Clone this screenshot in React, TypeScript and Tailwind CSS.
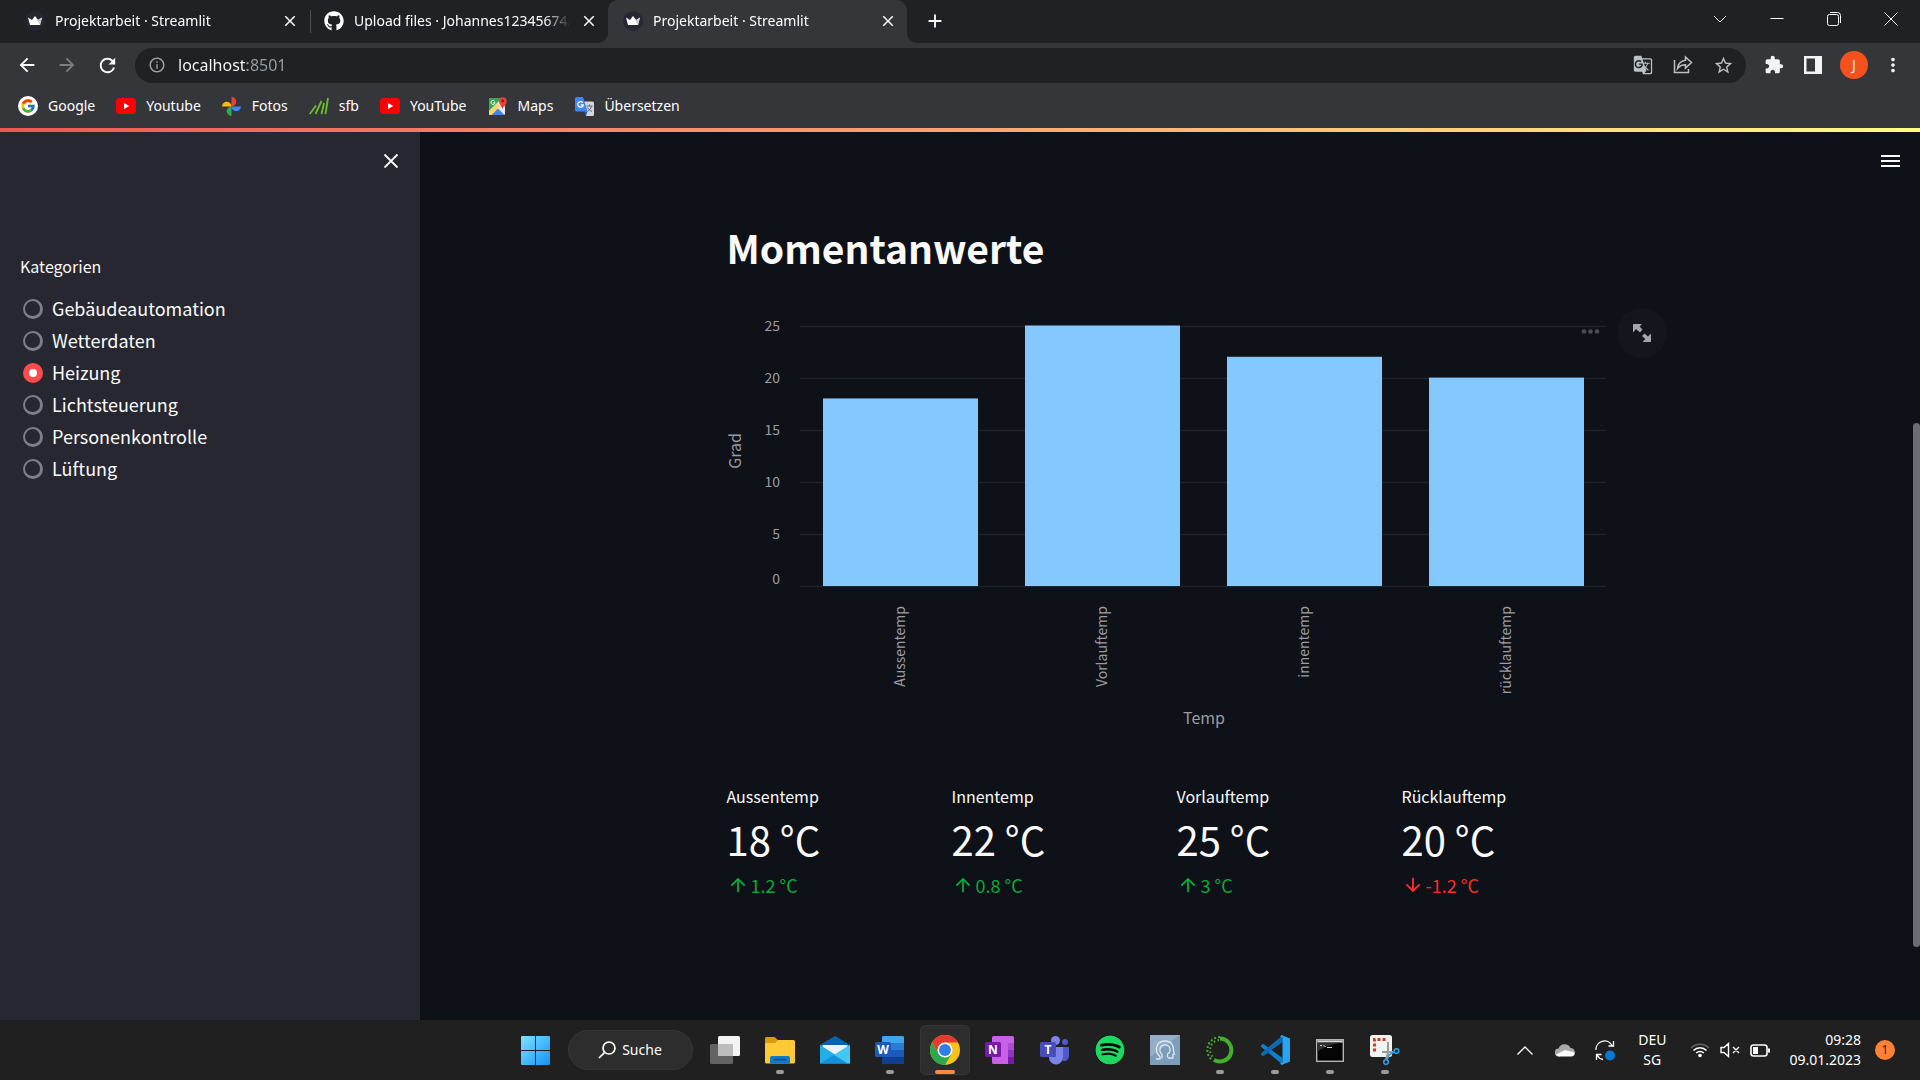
import React, { useState } from "react";
import { FcGoogle } from "react-icons/fc";
import { FaGithub, FaSpotify } from "react-icons/fa";
import {
  MdArrowBack,
  MdArrowForward,
  MdRefresh,
  MdInfoOutline,
  MdGTranslate,
  MdStarOutline,
  MdExtension,
  MdMoreVert,
  MdClose,
  MdAdd,
  MdArrowUpward,
  MdArrowDownward,
} from "react-icons/md";

/* ---------- Browser tabs ---------- */

function Crown() {
  return (
    <svg viewBox="0 0 20 20" className="size-5 shrink-0" aria-hidden="true">
      <circle cx="10" cy="10" r="10" fill="#262730" />
      <path d="M3 6.5l4 2.600L10 5l3 4.100 4-2.600-2 7.500H5z" fill="#fff" />
      <path d="M10 5l3 4.100 4-2.600-2 7.500z" fill="#c9c9ce" />
    </svg>
  );
}

function TabBody({ icon, title }: { icon: React.ReactNode; title: string }) {
  return (
    <>
      {icon}
      <span className="min-w-0 flex-1 overflow-hidden whitespace-nowrap [mask-image:linear-gradient(to_right,#000_88%,transparent)]">
        {title}
      </span>
      <button aria-label="Tab schließen" className="shrink-0">
        <MdClose className="size-[18px]" />
      </button>
    </>
  );
}

function TabStrip() {
  return (
    <div className="flex h-[43px] bg-[#35363a] text-sm text-white">
      <div className="flex w-[608px] shrink-0 rounded-br-[10px] bg-[#202124]">
        <div className="flex w-[310px] items-center gap-[10px] pr-[11px] pb-[2px] pl-[25px]">
          <TabBody icon={<Crown />} title="Projektarbeit · Streamlit" />
        </div>
        <div className="my-[10px] w-px bg-[#4d4e52]" />
        <div className="flex w-[297px] items-center gap-[10px] pr-[10px] pb-[2px] pl-[13px]">
          <TabBody icon={<FaGithub className="size-5 shrink-0" />} title="Upload files · Johannes12345674/" />
        </div>
      </div>
      <div className="flex shrink-0 bg-[#202124]">
        <div className="flex w-[299px] items-center gap-[10px] rounded-t-[10px] bg-[#35363a] pr-[10px] pb-[2px] pl-[15px]">
          <TabBody icon={<Crown />} title="Projektarbeit · Streamlit" />
        </div>
      </div>
      <div className="flex min-w-0 flex-1 items-center justify-between rounded-bl-[10px] bg-[#202124]">
        <button aria-label="Neuer Tab" className="mb-[2px] ml-[17px]">
          <MdAdd className="size-[22px]" />
        </button>
        <div className="mb-[6px] flex">
          <button aria-label="Tabs suchen" className="flex w-[57px] justify-center">
            <svg width="14" height="14" viewBox="0 0 14 14" fill="none" stroke="currentColor">
              <path d="M1 4l6 6 6-6" />
            </svg>
          </button>
          <button aria-label="Minimieren" className="flex w-[57px] justify-center">
            <svg width="14" height="14" viewBox="0 0 14 14" fill="none" stroke="currentColor">
              <path d="M0.500 6.500h13" />
            </svg>
          </button>
          <button aria-label="Verkleinern" className="flex w-[57px] justify-center">
            <svg width="14" height="14" viewBox="0 0 14 14" fill="none" stroke="currentColor">
              <rect x="0.500" y="2.500" width="11" height="11" rx="2" />
              <path d="M3 .5h7.500a3 3 0 0 1 3 3V11" />
            </svg>
          </button>
          <button aria-label="Schließen" className="flex w-[58px] justify-center">
            <svg width="14" height="14" viewBox="0 0 14 14" fill="none" stroke="currentColor">
              <path d="M.5.5l13 13M13.500.5l-13 13" />
            </svg>
          </button>
        </div>
      </div>
    </div>
  );
}

/* ---------- Toolbar ---------- */

function Toolbar() {
  return (
    <div className="flex h-[45px] items-center bg-[#35363a] pr-4 pb-px pl-4 text-white">
      <div className="flex w-[119px] shrink-0 items-center gap-[18px]">
        <button aria-label="Zurück"><MdArrowBack className="size-[22px]" /></button>
        <button aria-label="Vor"><MdArrowForward className="size-[22px] text-[#7d7e82]" /></button>
        <button aria-label="Neu laden"><MdRefresh className="size-[23px]" /></button>
      </div>
      <div className="flex h-[35px] flex-1 items-center rounded-full bg-[#202124] pr-3 pl-[13px] text-[#bdc1c6]">
        <MdInfoOutline className="size-[18px] text-[#9aa0a6]" />
        <input
          aria-label="Adresse"
          defaultValue="localhost:8501"
          className="ml-3 min-w-0 flex-1 bg-[linear-gradient(to_right,#fff_69px,#9aa0a6_69px)] bg-clip-text text-base leading-6 text-transparent outline-none"
        />
        <div className="flex items-center gap-5">
          <button aria-label="Übersetzen"><MdGTranslate className="size-[20px]" /></button>
          <button aria-label="Teilen">
            <svg className="size-5" viewBox="0 0 20 20" fill="none" stroke="currentColor" strokeWidth="1.500">
              <path d="M1.500 5v12.500h14V14M12.500 2l6 5.500-6 5.500v-3.200c-3.500 0-6 1.200-8 3.700.6-4.500 3.500-7.600 8-8.200z" />
            </svg>
          </button>
          <button aria-label="Lesezeichen"><MdStarOutline className="size-[21px]" /></button>
        </div>
      </div>
      <div className="ml-[18px] flex items-center text-[#f1f3f4]">
        <button aria-label="Erweiterungen"><MdExtension className="size-5" /></button>
        <button aria-label="Seitenleiste" className="ml-5">
          <svg className="size-[18px]" viewBox="0 0 18 18">
            <path d="M0 0h18v18H0zM2.500 2.500v13h8.500v-13z" fill="currentColor" fillRule="evenodd" />
          </svg>
        </button>
        <button className="ml-[18px] size-7 rounded-full bg-[#f4511e] text-sm leading-7">J</button>
        <button aria-label="Menü" className="ml-[14px]"><MdMoreVert className="size-[22px]" /></button>
      </div>
    </div>
  );
}

/* ---------- Bookmarks ---------- */

function YouTubeIcon() {
  return (
    <svg width="20" height="16" viewBox="0 0 20 16">
      <rect width="20" height="16" rx="3.500" fill="#f00" />
      <path d="M8 5l5.200 3L8 11z" fill="#fff" />
    </svg>
  );
}

function PhotosIcon() {
  return (
    <svg width="19" height="19" viewBox="0 0 20 20">
      <path d="M10 0a5 5 0 0 1 0 10z" fill="#ea4335" />
      <path d="M20 10a5 5 0 0 1-10 0z" fill="#4285f4" />
      <path d="M10 20a5 5 0 0 1 0-10z" fill="#34a853" />
      <path d="M0 10a5 5 0 0 1 10 0z" fill="#fbbc04" />
    </svg>
  );
}

function SfbIcon() {
  return (
    <svg width="20" height="18" viewBox="0 0 20 18" fill="none" stroke="#6cbf2d" strokeWidth="1.800">
      <path d="M.8 17L7 8.500M6.500 17l6-13M12.500 17L15 6M16.500 17L19 1" />
    </svg>
  );
}

function MapsIcon() {
  return (
    <svg width="18" height="18" viewBox="0 0 18 18">
      <rect y="1" width="16" height="17" rx="1.500" fill="#e8eaed" />
      <path d="M0 2.500A1.500 1.500 0 0 1 1.500 1H13L0 14z" fill="#34a853" />
      <path d="M0 14L8 6.500l3 3L2.500 18H1.500A1.500 1.500 0 0 1 0 16.500z" fill="#fdd663" />
      <path d="M2.500 18L9 11.500 15.500 18z" fill="#4285f4" />
      <path d="M13.300 12c-.5-3-3.300-4.300-3.300-8a3.700 3.700 0 1 1 7.700 0c0 3.700-3.200 5-4.400 8z" fill="#ea4335" />
      <circle cx="13.800" cy="4" r="1.400" fill="#8c1c13" />
      <path d="M5.800 4.500a2 2 0 1 0 .2 1.300H4.200" stroke="#fff" fill="none" />
    </svg>
  );
}

function TranslateIcon() {
  return (
    <svg width="19" height="19" viewBox="0 0 19 19">
      <path d="M8 4.500h9.500A1.500 1.500 0 0 1 19 6v11.500a1.500 1.500 0 0 1-1.500 1.500H11z" fill="#d3d6da" />
      <path d="M11.500 9h6M14.500 7.500V9M16.500 9c-.5 2.500-2 4-4 5.500M12.500 10.500c.8 1.800 2.500 3 4.500 4" stroke="#5f6b80" fill="none" />
      <path d="M1.500 0H8l4.500 14.500h-11A1.500 1.500 0 0 1 0 13V1.500A1.500 1.500 0 0 1 1.500 0z" fill="#4285f4" />
      <path d="M7.800 5.700A2.800 2.800 0 1 0 8.300 8H5.700" stroke="#fff" strokeWidth="1.300" fill="none" />
      <path d="M9 14.500h3.500L11 19z" fill="#1a56c4" />
    </svg>
  );
}

const bookmarks = [
  {
    label: "Google",
    icon: (
      <span className="flex size-5 items-center justify-center rounded-full bg-white">
        <FcGoogle className="size-4" />
      </span>
    ),
  },
  { label: "Youtube", icon: <YouTubeIcon /> },
  { label: "Fotos", icon: <PhotosIcon /> },
  { label: "sfb", icon: <SfbIcon /> },
  { label: "YouTube", icon: <YouTubeIcon /> },
  { label: "Maps", icon: <MapsIcon /> },
  { label: "Übersetzen", icon: <TranslateIcon /> },
];

function Bookmarks() {
  return (
    <nav className="flex h-10 items-center gap-[21px] bg-[#35363a] pb-1 pl-[18px] text-sm text-white">
      {bookmarks.map((b, i) => (
        <a key={i} href="#" className="flex items-center gap-[10px]">
          <span className="flex w-5 justify-center">{b.icon}</span>
          {b.label}
        </a>
      ))}
    </nav>
  );
}

/* ---------- Streamlit sidebar ---------- */

const categories = ["Gebäudeautomation", "Wetterdaten", "Heizung", "Lichtsteuerung", "Personenkontrolle", "Lüftung"];

function Sidebar() {
  const [active, setActive] = useState("Heizung");
  return (
    <aside className="w-[420px] shrink-0 bg-[#262730] text-[#fafafa]">
      <div className="flex h-[58px] items-center justify-end pr-[19px]">
        <button aria-label="Seitenleiste schließen">
          <svg className="size-5" viewBox="0 0 20 20" stroke="currentColor" strokeWidth="1.800">
            <path d="M3.500 3.500l13 13M16.500 3.500l-13 13" />
          </svg>
        </button>
      </div>
      <fieldset className="mt-16 px-5">
        <legend className="text-base leading-6">Kategorien</legend>
        <div className="mt-[15px] flex flex-col">
          {categories.map((c) => (
            <label key={c} className="flex h-8 items-center gap-[9px] pl-[3px] text-lg leading-[30px]">
              <input
                type="radio"
                name="kategorie"
                checked={active === c}
                onChange={() => setActive(c)}
                className="size-5 appearance-none rounded-full border-2 border-r-[3px] border-b-[3px] border-[#7d7e87] bg-[#262730] checked:border-[6px] checked:border-[#ff4b4b] checked:bg-white"
              />
              <span className="pb-[2px]">{c}</span>
            </label>
          ))}
        </div>
      </fieldset>
    </aside>
  );
}

/* ---------- Chart ---------- */

const ticks = [0, 5, 10, 15, 20, 25];
const bars = [
  { name: "Aussentemp", value: 18 },
  { name: "Vorlauftemp", value: 25 },
  { name: "innentemp", value: 22 },
  { name: "rücklauftemp", value: 20 },
];
const BASE = 278;
const UNIT = 10.42;

function Chart() {
  return (
    <div className="relative mt-[34px]">
      <svg viewBox="0 0 880 423" className="w-full overflow-visible" role="img" aria-label="Temperaturen in Grad">
        {ticks.map((t) => (
          <g key={t}>
            <path d={`M73 ${Math.round(BASE - t * UNIT) + 0.5}h806`} stroke="#20232a" strokeWidth="1.500" />
            <text
              x="53"
              y={BASE - t * UNIT + (t === 0 ? -2 : 5)}
              textAnchor="end"
              fontSize="14"
              fill="#9b9ca2"
            >
              {t}
            </text>
          </g>
        ))}
        {bars.map((b, i) => (
          <g key={b.name}>
            <rect x={96 + i * 202} y={BASE - b.value * UNIT} width="155" height={b.value * UNIT} fill="#83c9ff" />
            <text
              transform={`translate(${178 + i * 202} 298) rotate(-90)`}
              textAnchor="end"
              fontSize="14"
              fill="#9b9ca2"
            >
              {b.name}
            </text>
          </g>
        ))}
        <text transform="translate(14 143) rotate(-90)" textAnchor="middle" fontSize="16" fill="#9b9ca2">
          Grad
        </text>
        <text x="477" y="416" textAnchor="middle" fontSize="16" fill="#9b9ca2">
          Temp
        </text>
        <g fill="#4b4d53">
          <circle cx="857" cy="23.500" r="2.300" />
          <circle cx="863.500" cy="23.500" r="2.300" />
          <circle cx="870" cy="23.500" r="2.300" />
        </g>
      </svg>
      <button
        aria-label="Vollbild"
        className="absolute top-0 left-full ml-[10px] flex size-[50px] items-center justify-center rounded-full bg-[#13161d]"
      >
        <svg className="size-[18px]" viewBox="0 0 18 18" fill="#a3a5a9">
          <path d="M0 0h9L6.500 2.500 9.500 5.500 7 8.500l-4-3.500L0 8.500zM18 18H9.500l2.800-3L9 12l2.500-2.500 3.500 3 3-3z" />
        </svg>
      </button>
    </div>
  );
}

/* ---------- Metrics ---------- */

const metrics = [
  { label: "Aussentemp", value: "18 °C", delta: "1.2 °C", up: true },
  { label: "Innentemp", value: "22 °C", delta: "0.8 °C", up: true },
  { label: "Vorlauftemp", value: "25 °C", delta: "3 °C", up: true },
  { label: "Rücklauftemp", value: "20 °C", delta: "-1.2 °C", up: false },
];

function Metrics() {
  return (
    <div className="mt-[53px] grid grid-cols-4 gap-5">
      {metrics.map((m) => (
        <div key={m.label}>
          <div className="text-base leading-6">{m.label}</div>
          <div className="mt-1 text-[40px] leading-[54px]">{m.value}</div>
          <div className={m.up ? "mt-[7px] flex items-center gap-[2px] text-lg leading-6 text-[#09ab3b]" : "mt-[7px] flex items-center gap-[2px] text-lg leading-6 text-[#ff2b2b]"}>
            {m.up ? <MdArrowUpward className="size-[22px]" /> : <MdArrowDownward className="size-[22px]" />}
            {m.delta}
          </div>
        </div>
      ))}
    </div>
  );
}

/* ---------- Taskbar ---------- */

function StartIcon() {
  return (
    <svg className="size-[29px]" viewBox="0 0 29 29">
      <defs>
        <linearGradient id="win" x1="0" y1="0" x2="1" y2="1">
          <stop offset="0" stopColor="#7be3ff" />
          <stop offset="1" stopColor="#1593f5" />
        </linearGradient>
      </defs>
      <path
        d="M1 0h13v14H0V1a1 1 0 0 1 1-1zM15 0h13a1 1 0 0 1 1 1v13H15zM0 15h14v14H1a1 1 0 0 1-1-1zM15 15h14v13a1 1 0 0 1-1 1H15z"
        fill="url(#win)"
      />
    </svg>
  );
}

function TaskViewIcon() {
  return (
    <svg className="size-[30px]" viewBox="0 0 30 30">
      <rect x="0" y="9" width="23" height="20" rx="1.500" fill="#636363" />
      <rect x="8" y="1" width="22" height="20" rx="1.500" fill="#f3f3f3" />
      <path d="M8 9h15v12H8z" fill="#bdbdbd" />
    </svg>
  );
}

function ExplorerIcon() {
  return (
    <svg className="size-[30px]" viewBox="0 0 30 30">
      <path d="M0 3.500A1.500 1.500 0 0 1 1.500 2h8L13 5v5H0z" fill="#d99a10" />
      <path d="M0 8l10 0 3-3h15.500A1.500 1.500 0 0 1 30 6.500V27a1.500 1.500 0 0 1-1.500 1.500h-27A1.500 1.500 0 0 1 0 27z" fill="#fdc935" />
      <path d="M5 28.500V23a2 2 0 0 1 2-2h16a2 2 0 0 1 2 2v5.500z" fill="#0f78c8" />
      <path d="M9 24.500h12" stroke="#0a4f8c" strokeWidth="1.500" />
    </svg>
  );
}

function MailIcon() {
  return (
    <svg className="size-[30px]" viewBox="0 0 30 30">
      <path d="M0 10L15 1l15 9v6H0z" fill="#0a62b5" />
      <path d="M2.500 10h25v9h-25z" fill="#eef1f4" />
      <path d="M0 10l15 9.500L30 10v18.500H0z" fill="#23aeea" />
      <path d="M30 10L13 20.500 26 28.500h4z" fill="#42c8f5" />
      <path d="M0 28.500l14-8.500 14 8.500z" fill="#1590dc" />
    </svg>
  );
}

function LetterBadge({ letter, color }: { letter: string; color: string }) {
  return (
    <>
      <rect x="0" y="7" width="16" height="15" rx="1.500" fill={color} />
      <text x="8" y="18.500" textAnchor="middle" fontSize="12" fontWeight="700" fill="#fff">
        {letter}
      </text>
    </>
  );
}

function WordIcon() {
  return (
    <svg className="size-[30px]" viewBox="0 0 30 30">
      <rect x="7" y="1" width="22" height="28" rx="1.500" fill="#2b7cd3" />
      <path d="M7 8V2.500A1.500 1.500 0 0 1 8.500 1h19A1.500 1.500 0 0 1 29 2.500V8z" fill="#41a5ee" />
      <path d="M7 15h22v7H7z" fill="#185abd" />
      <path d="M7 22h22v5.500a1.500 1.500 0 0 1-1.500 1.500h-19A1.500 1.500 0 0 1 7 27.500z" fill="#103f91" />
      <LetterBadge letter="W" color="#185abd" />
    </svg>
  );
}

function ChromeIcon() {
  return (
    <svg className="size-[30px]" viewBox="0 0 30 30">
      <circle cx="15" cy="15" r="15" fill="#fbc116" />
      <path d="M2 7.500A15 15 0 0 1 28 7.500H15L8.500 18.750z" fill="#e33b2e" />
      <path d="M2 7.500A15 15 0 0 0 15 30l6.500-11.250L8.500 18.750z" fill="#2ca94f" />
      <circle cx="15" cy="15" r="7.500" fill="#fff" />
      <circle cx="15" cy="15" r="6" fill="#2f7de9" />
    </svg>
  );
}

function OneNoteIcon() {
  return (
    <svg className="size-[30px]" viewBox="0 0 30 30">
      <rect x="7" y="1" width="22" height="28" rx="1.500" fill="#c961e6" />
      <path d="M23 8h6v7h-6z" fill="#ae4bd5" />
      <path d="M23 15h6v7h-6z" fill="#9332bf" />
      <path d="M23 22h6v7h-6z" fill="#7719aa" />
      <LetterBadge letter="N" color="#7719aa" />
    </svg>
  );
}

function TeamsIcon() {
  return (
    <svg className="size-[30px]" viewBox="0 0 30 30">
      <circle cx="15.500" cy="5.500" r="4.500" fill="#7b83eb" />
      <circle cx="25" cy="7" r="3" fill="#5059c9" />
      <path d="M20 12h9v9a5 5 0 0 1-6 5z" fill="#5059c9" />
      <path d="M8 12h15v10a7 7 0 0 1-14 1z" fill="#7b83eb" />
      <LetterBadge letter="T" color="#464eb8" />
    </svg>
  );
}

function HeadIcon() {
  return (
    <svg className="size-[30px]" viewBox="0 0 30 30">
      <rect width="30" height="30" fill="#7c9cba" />
      <path d="M0 0h30L0 22z" fill="#93aec6" />
      <g fill="none" stroke="#dfe9f2" strokeWidth="1.300">
        <path d="M6 24h4v-2.500C4.500 17 5 6.500 14.500 6c7-.2 9.500 5 9 9.500l1 3.500-1.500.5v3.500h-5" />
        <path d="M12 23.500v-4C8.500 16.500 9.500 9.800 15 9.800c6 .2 6.500 7.200 2.500 9.200v3.500" />
      </g>
    </svg>
  );
}

function AnacondaIcon() {
  return (
    <svg className="size-[30px]" viewBox="0 0 30 30" fill="none" stroke="#43b02a">
      <path d="M15 3.500a11.500 11.500 0 1 1-6 21.400" strokeWidth="4" />
      <path d="M15 2a13 13 0 0 0-8 23" strokeWidth="2" strokeDasharray="2 2" />
      <path d="M14 5a10 10 0 0 0-6 17" strokeWidth="2" strokeDasharray="1.500 2.500" />
    </svg>
  );
}

function CodeIcon() {
  return (
    <svg className="size-[30px]" viewBox="0 0 30 30">
      <path d="M1 10.500L3 8.800 22.500 23v6.500L1 11.800z" fill="#0f7fcb" />
      <path d="M1 19.500l2 1.700L22.500 7V.5L1 18.200z" fill="#0b6cb4" />
      <path d="M21.500 0L30 3.500v23L21.500 30 20 28.500l2.500-1V2.500L20 1.500z" fill="#27a5f2" />
    </svg>
  );
}

function TerminalIcon() {
  return (
    <svg className="size-[28px]" viewBox="0 0 28 28">
      <rect x=".7" y="3.700" width="26.600" height="21.600" fill="#050505" stroke="#b5b5b5" strokeWidth="1.400" />
      <path d="M1.400 4.400h25.200v2.200H1.400z" fill="#d9d9d9" />
      <path d="M1.400 6.600h25.200C18 8 8 11 1.400 16z" fill="#303030" />
      <path d="M4 9.500h2M7.500 9l2 2M11 11.500h5" stroke="#d0d0d0" />
    </svg>
  );
}

function SnipIcon() {
  return (
    <svg className="size-[30px]" viewBox="0 0 30 30" fill="none">
      <rect width="22" height="22" rx="2.500" fill="#f2f2f2" />
      <path d="M4.500 16.500V4.500h12.500" stroke="#d1401c" strokeWidth="3" strokeDasharray="3 2" />
      <path d="M18 7v11l-2 6M12 17h11" stroke="#9a9a9a" strokeWidth="2" />
      <circle cx="16" cy="27" r="2.300" stroke="#2aa3e6" strokeWidth="1.600" />
      <circle cx="26.500" cy="16" r="2.300" stroke="#2aa3e6" strokeWidth="1.600" />
      <path d="M17 25l2-5 5-3" stroke="#2aa3e6" strokeWidth="1.800" />
    </svg>
  );
}

const apps = [
  { name: "Aktive Anwendungen", icon: <TaskViewIcon />, state: "" },
  { name: "Explorer", icon: <ExplorerIcon />, state: "open" },
  { name: "Mail", icon: <MailIcon />, state: "" },
  { name: "Word", icon: <WordIcon />, state: "open" },
  { name: "Chrome", icon: <ChromeIcon />, state: "active" },
  { name: "OneNote", icon: <OneNoteIcon />, state: "" },
  { name: "Teams", icon: <TeamsIcon />, state: "" },
  { name: "Spotify", icon: <FaSpotify className="size-[30px] rounded-full bg-black text-[#1ed760]" />, state: "" },
  { name: "Profil", icon: <HeadIcon />, state: "" },
  { name: "Anaconda", icon: <AnacondaIcon />, state: "open" },
  { name: "Visual Studio Code", icon: <CodeIcon />, state: "open" },
  { name: "Eingabeaufforderung", icon: <TerminalIcon />, state: "open" },
  { name: "Snipping Tool", icon: <SnipIcon />, state: "open" },
];

function AppButton({ name, icon, state }: { name: string; icon: React.ReactNode; state: string }) {
  return (
    <button
      aria-label={name}
      className={
        state === "active"
          ? "relative flex size-[50px] items-center justify-center rounded-[5px] border border-[#363636] bg-[#2d2d2d]"
          : "relative flex size-[50px] items-center justify-center"
      }
    >
      {icon}
      {state === "open" && <span className="absolute bottom-[1px] h-1 w-2 rounded-full bg-[#9b9b9b]" />}
      {state === "active" && <span className="absolute bottom-0 h-1 w-5 rounded-full bg-[#ff8c3c]" />}
    </button>
  );
}

function Taskbar() {
  return (
    <footer className="grid h-[60px] grid-cols-[1fr_auto_1fr] items-center bg-[#202020] text-[15px] text-white">
      <div />
      <div className="flex items-center gap-[5px]">
        <button aria-label="Start" className="mr-[2px] flex size-[50px] items-center justify-center">
          <StartIcon />
        </button>
        <button className="mr-[2px] flex h-10 w-[125px] items-center justify-center gap-[6px] rounded-full border border-[#363636] bg-[#2d2d2d] text-sm">
          <svg className="size-[18px]" viewBox="0 0 18 18" fill="none" stroke="currentColor" strokeWidth="1.700">
            <circle cx="11" cy="7" r="6" />
            <path d="M6.700 11.300L1 17" />
          </svg>
          Suche
        </button>
        {apps.map((a) => (
          <AppButton key={a.name} {...a} />
        ))}
      </div>
      <div className="flex items-center justify-end pr-[25px] text-sm leading-5">
        <svg width="16" height="9" viewBox="0 0 16 9" fill="none" stroke="currentColor" strokeWidth="1.300">
          <path d="M.5 8.500L8 1l7.500 7.500" />
        </svg>
        <svg className="ml-[22px]" width="20" height="14" viewBox="0 0 20 14">
          <path d="M4 13.500A4 4 0 0 1 3.500 5.500a6.500 6.500 0 0 1 12-.5A4.300 4.300 0 0 1 20 9.300z" fill="#a9a9a9" />
          <path d="M1 11.500L10 7l9.800 2.500a4 4 0 0 1-3.800 4H4a4 4 0 0 1-3-2z" fill="#fff" />
        </svg>
        <svg className="ml-5" width="20" height="21" viewBox="0 0 20 21" fill="none" stroke="#fff" strokeWidth="1.300">
          <path d="M1 10a8.500 8.500 0 0 1 16-4.500M18.500 1v5h-5M8 19.500A8.500 8.500 0 0 1 2 15M1.500 20v-5.500h5" />
          <circle cx="15" cy="15.500" r="5" fill="#0a78d6" stroke="none" />
        </svg>
        <div className="ml-[23px] text-center">
          DEU
          <br />
          SG
        </div>
        <svg className="ml-6" width="20" height="16" viewBox="0 0 20 16" fill="none" stroke="#fff" strokeWidth="1.500">
          <path d="M1 6a12.500 12.500 0 0 1 18 0" stroke="#666" />
          <path d="M3.500 8.500a9 9 0 0 1 13 0M6.200 11a5.500 5.500 0 0 1 7.600 0" />
          <circle cx="10" cy="13.500" r="1.800" fill="#fff" stroke="none" />
        </svg>
        <svg className="ml-[10px]" width="20" height="16" viewBox="0 0 20 16" fill="none" stroke="#fff" strokeWidth="1.400">
          <path d="M1 5.500h3L8.500 1.500v13L4 10.500H1zM13 5l6 6M19 5l-6 6" />
        </svg>
        <svg className="ml-[10px]" width="20" height="13" viewBox="0 0 20 13" fill="none" stroke="#fff" strokeWidth="1.600">
          <rect x="1" y="1" width="16" height="11" rx="2.500" />
          <path d="M3 3h5v7H3z" fill="#fff" stroke="none" />
          <path d="M19 4.500v4" strokeWidth="2" />
        </svg>
        <div className="ml-[19px] text-right">
          09:28
          <br />
          09.01.2023
        </div>
        <button className="ml-[14px] size-5 rounded-full bg-[#ff8133] text-xs leading-5 text-[#202020]">1</button>
      </div>
    </footer>
  );
}

/* ---------- Page ---------- */

export default function App() {
  return (
    <div className="flex min-h-screen flex-col bg-[#0e1117] font-['Noto_Sans',sans-serif]">
      <TabStrip />
      <Toolbar />
      <Bookmarks />
      <div className="h-1 bg-linear-to-r from-[#f05555] via-[#fca36f] to-[#fffd80]" />
      <div className="flex flex-1 font-['Noto_Sans_CJK_SC',sans-serif]">
        <Sidebar />
        <main className="min-w-0 flex-1 text-[#fafafa]">
          <div className="flex h-[58px] items-center justify-end pr-[13px]">
            <button aria-label="Menü" className="flex w-[19px] flex-col gap-[3px]">
              <span className="h-[2px] w-full bg-[#fafafa]" />
              <span className="h-[2px] w-full bg-[#fafafa]" />
              <span className="h-[2px] w-full bg-[#fafafa]" />
            </button>
          </div>
          <section className="mx-auto w-full max-w-[880px]">
            <h2 className="mt-[30px] text-[39px] leading-[54px] font-semibold">Momentanwerte</h2>
            <Chart />
            <Metrics />
          </section>
        </main>
        <div className="w-[7px] shrink-0">
          <div className="mt-[291px] h-[524px] rounded-full bg-[#6b6d72]" />
        </div>
      </div>
      <Taskbar />
    </div>
  );
}
